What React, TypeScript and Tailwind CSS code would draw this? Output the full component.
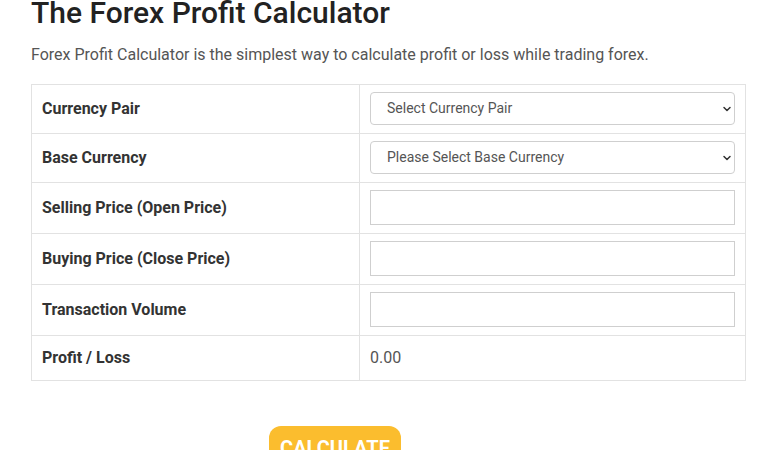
import { ChevronDown } from "lucide-react";

type Row = {
  label: string;
  kind: "select" | "input" | "value";
  placeholder?: string;
};

const rows: Row[] = [
  { label: "Currency Pair", kind: "select", placeholder: "Select Currency Pair" },
  { label: "Base Currency", kind: "select", placeholder: "Please Select Base Currency" },
  { label: "Selling Price (Open Price)", kind: "input" },
  { label: "Buying Price (Close Price)", kind: "input" },
  { label: "Transaction Volume", kind: "input" },
  { label: "Profit / Loss", kind: "value" },
];

const App = () => {
  return (
    <div className="h-[450px] bg-white font-['Roboto',sans-serif] overflow-hidden">
      <div className="pl-[31px] pr-[27px]">
        {/* Heading */}
        <h1 className="text-[30px] leading-[26px] font-medium text-[#222]">
          The Forex Profit Calculator
        </h1>
        <p className="mt-[17px] text-[16px] leading-[24px] text-[#555]">
          Forex Profit Calculator is the simplest way to calculate profit or loss while trading forex.
        </p>

        {/* Calculator table */}
        <table className="mt-[17px] w-[715px] border-collapse border border-[#e2e2e2]">
          <tbody>
            {rows.map((row) => (
              <tr key={row.label} className="border-b border-[#e2e2e2]">
                <td className="w-[328px] border-r border-[#e2e2e2] px-[10px] align-middle text-[16px] font-bold text-[#333]">
                  {row.label}
                </td>
                <td
                  className={
                    row.kind === "value"
                      ? "px-[10px] py-[7px] align-middle"
                      : "px-[10px] pt-[7px] pb-[8px] align-middle"
                  }
                >
                  {row.kind === "select" && (
                    <div className="relative">
                      <select className="h-[33px] w-full appearance-none rounded-[4px] border border-[#cfcfcf] bg-white pl-[16px] text-[14px] text-[#555] outline-none">
                        <option>{row.placeholder}</option>
                      </select>
                      <ChevronDown
                        size={12}
                        strokeWidth={3}
                        className="pointer-events-none absolute right-[2px] top-[11px] text-[#333]"
                      />
                    </div>
                  )}
                  {row.kind === "input" && (
                    <input
                      type="text"
                      className="block h-[35px] w-full border border-[#cfcfcf] bg-white px-[10px] text-[14px] outline-none"
                    />
                  )}
                  {row.kind === "value" && (
                    <div className="py-[3px] text-[16px] leading-[24px] text-[#555]">0.00</div>
                  )}
                </td>
              </tr>
            ))}
          </tbody>
        </table>

        {/* Submit */}
        <button
          type="button"
          className="mt-[45px] ml-[238px] block h-[50px] w-[132px] rounded-[12px] bg-[#fbbd2e] pt-[8px] pb-[14px] text-center text-[20px] leading-[28px] font-bold text-white"
        >
          CALCULATE
        </button>
      </div>
    </div>
  );
};

export default App;
